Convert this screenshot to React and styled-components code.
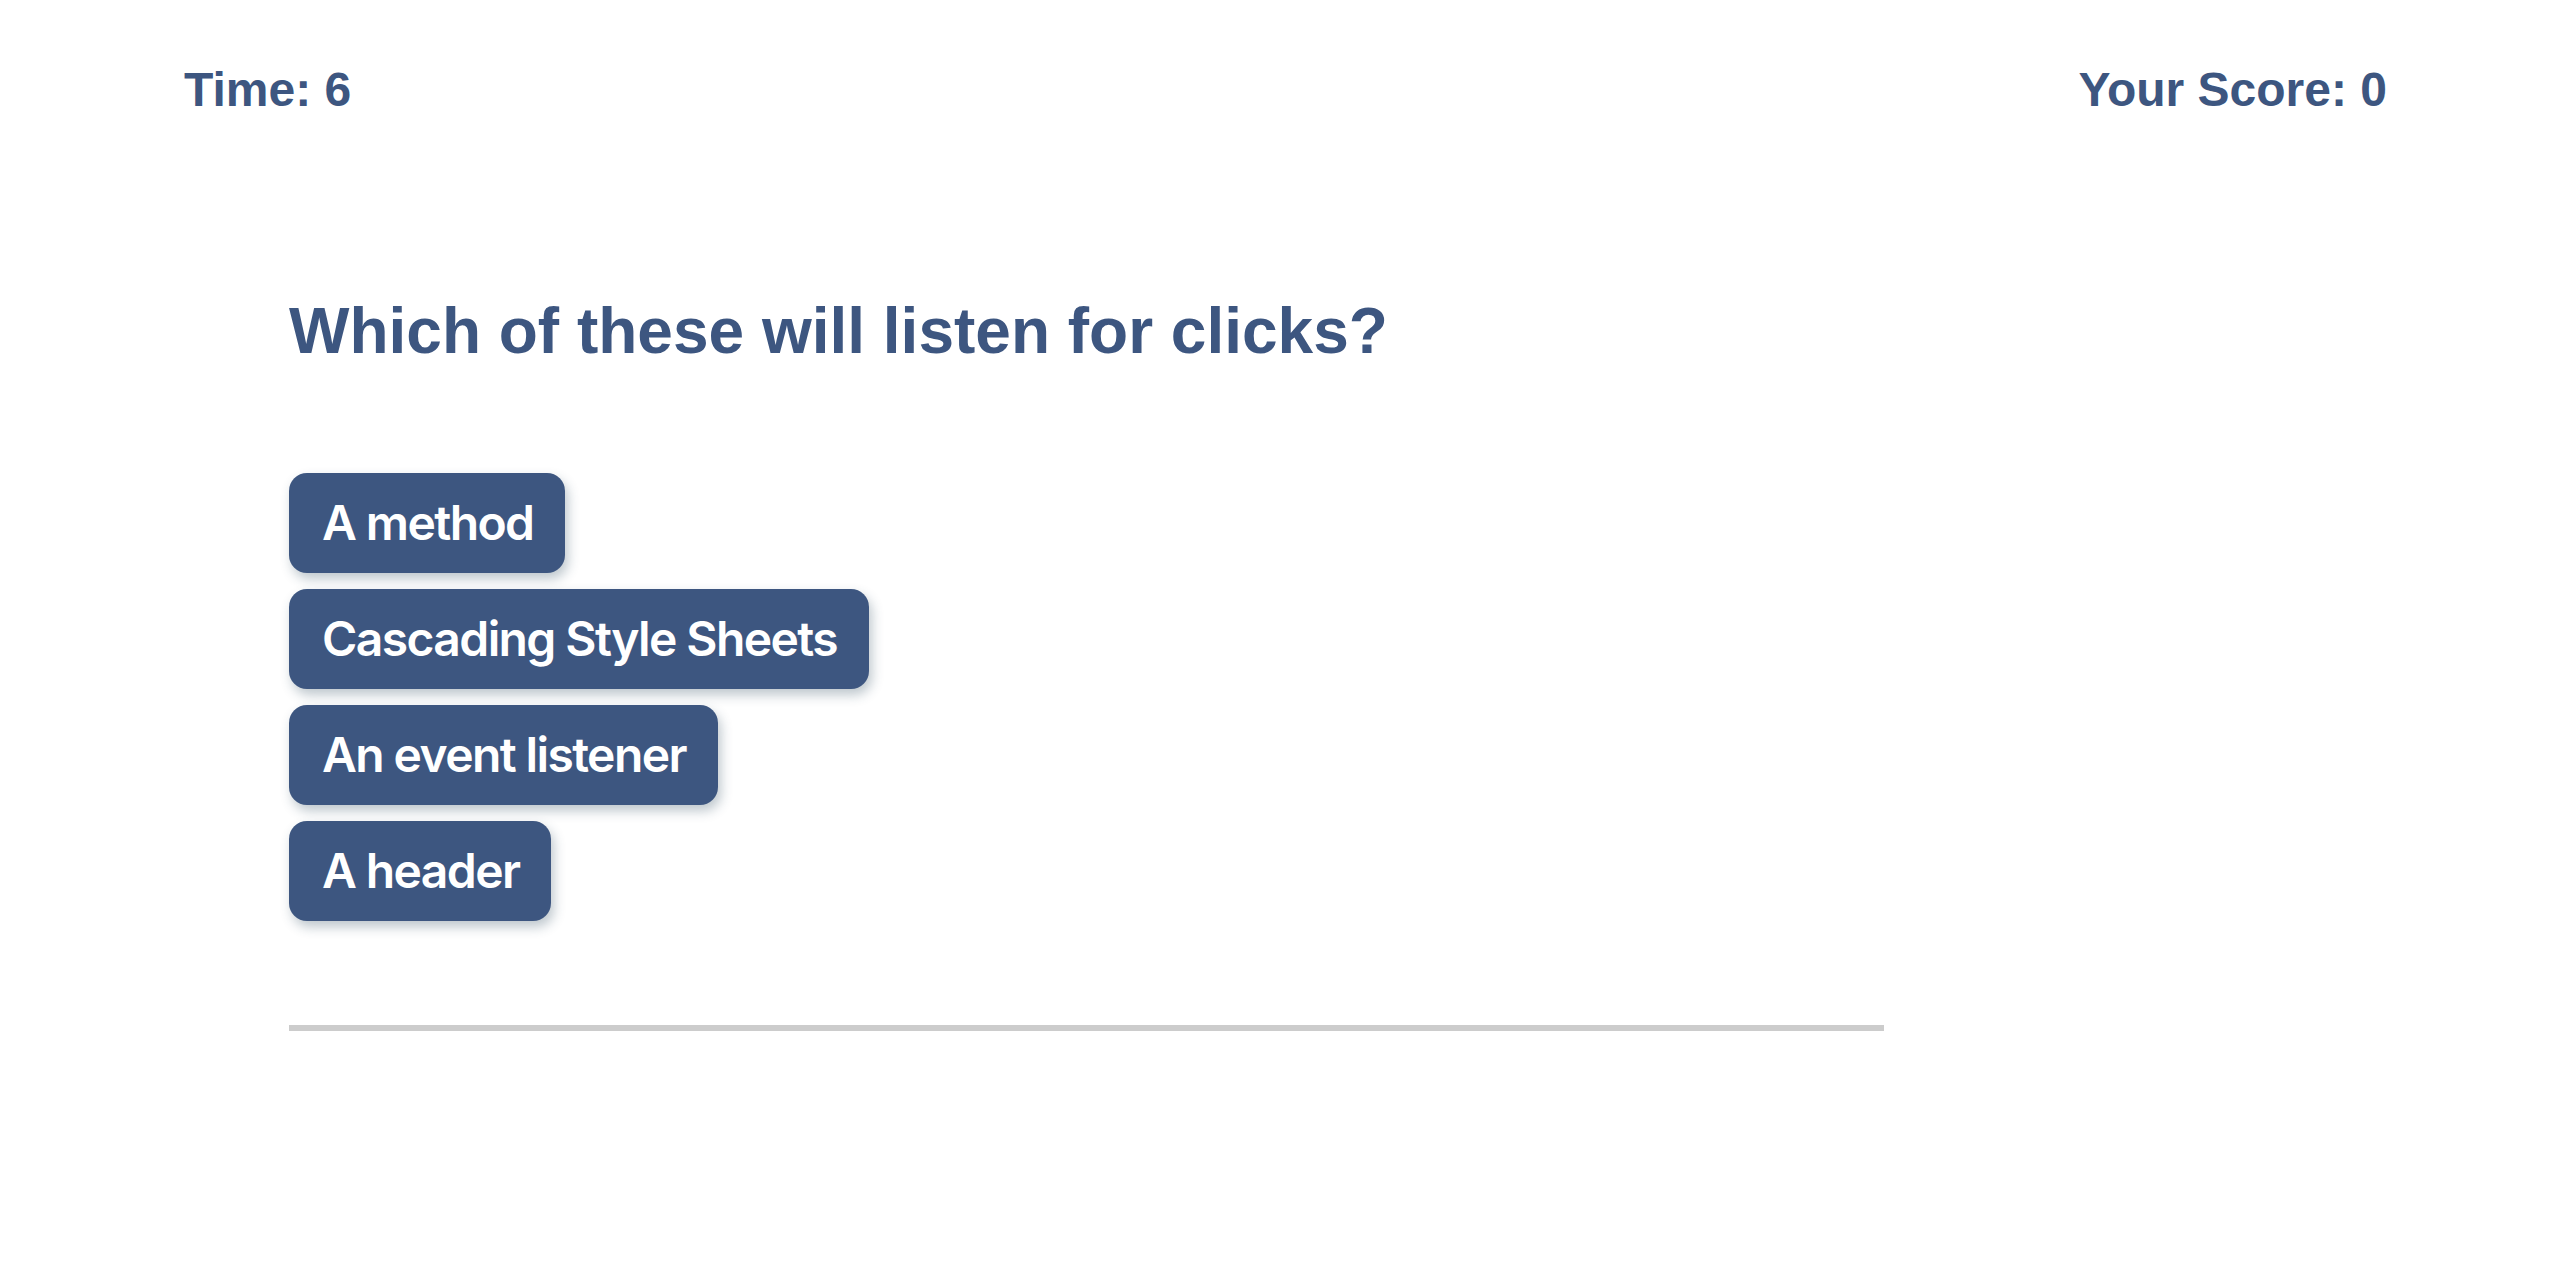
import React from "react";
import styled, { createGlobalStyle } from "styled-components";

const Global = createGlobalStyle`
  html, body { margin: 0; padding: 0; background: #ffffff; }
  body { font-family: "Liberation Sans", Arial, sans-serif; }
`;

const Page = styled.div`
  width: 2556px;
  min-height: 1288px;
  display: flex;
  flex-direction: column;
`;

const Header = styled.header`
  display: flex;
  justify-content: space-between;
  align-items: flex-start;
  padding: 66px 169px 0 184px;
`;

const Stat = styled.div`
  font-family: "Liberation Sans", Arial, sans-serif;
  font-weight: 700;
  font-size: 48px;
  line-height: 48px;
  color: #3d5680;
`;

const Main = styled.main`
  display: flex;
  flex-direction: column;
  align-items: flex-start;
  padding: 185px 0 0 289px;
`;

const Question = styled.h1`
  margin: 0;
  font-family: "Liberation Sans", Arial, sans-serif;
  font-weight: 700;
  font-size: 64px;
  line-height: 64px;
  color: #3d5680;
`;

const Choices = styled.div`
  display: flex;
  flex-direction: column;
  align-items: flex-start;
  gap: 16px;
  margin-top: 110px;
`;

const Choice = styled.button`
  border: none;
  margin: 0;
  cursor: pointer;
  background: #3d5680;
  color: #ffffff;
  font-family: Inter, "Noto Sans", sans-serif;
  font-weight: 600;
  font-size: 48px;
  line-height: 56px;
  letter-spacing: -1.6px;
  padding: 22px 32px 22px 33px;
  border-radius: 18px;
  box-shadow: 3px 6px 12px rgba(40, 70, 90, 0.3);
`;

const Divider = styled.hr`
  margin: 104px 0 0 0;
  width: 1595px;
  height: 6px;
  border: none;
  background: #cccccc;
`;

const answers = ["A method", "Cascading Style Sheets", "An event listener", "A header"];

export default function App() {
  return (
    <Page>
      <Global />
      <Header>
        <Stat>Time: 6</Stat>
        <Stat>Your Score: 0</Stat>
      </Header>
      <Main>
        <Question>Which of these will listen for clicks?</Question>
        <Choices>
          {answers.map((a) => (
            <Choice key={a}>{a}</Choice>
          ))}
        </Choices>
        <Divider />
      </Main>
    </Page>
  );
}
